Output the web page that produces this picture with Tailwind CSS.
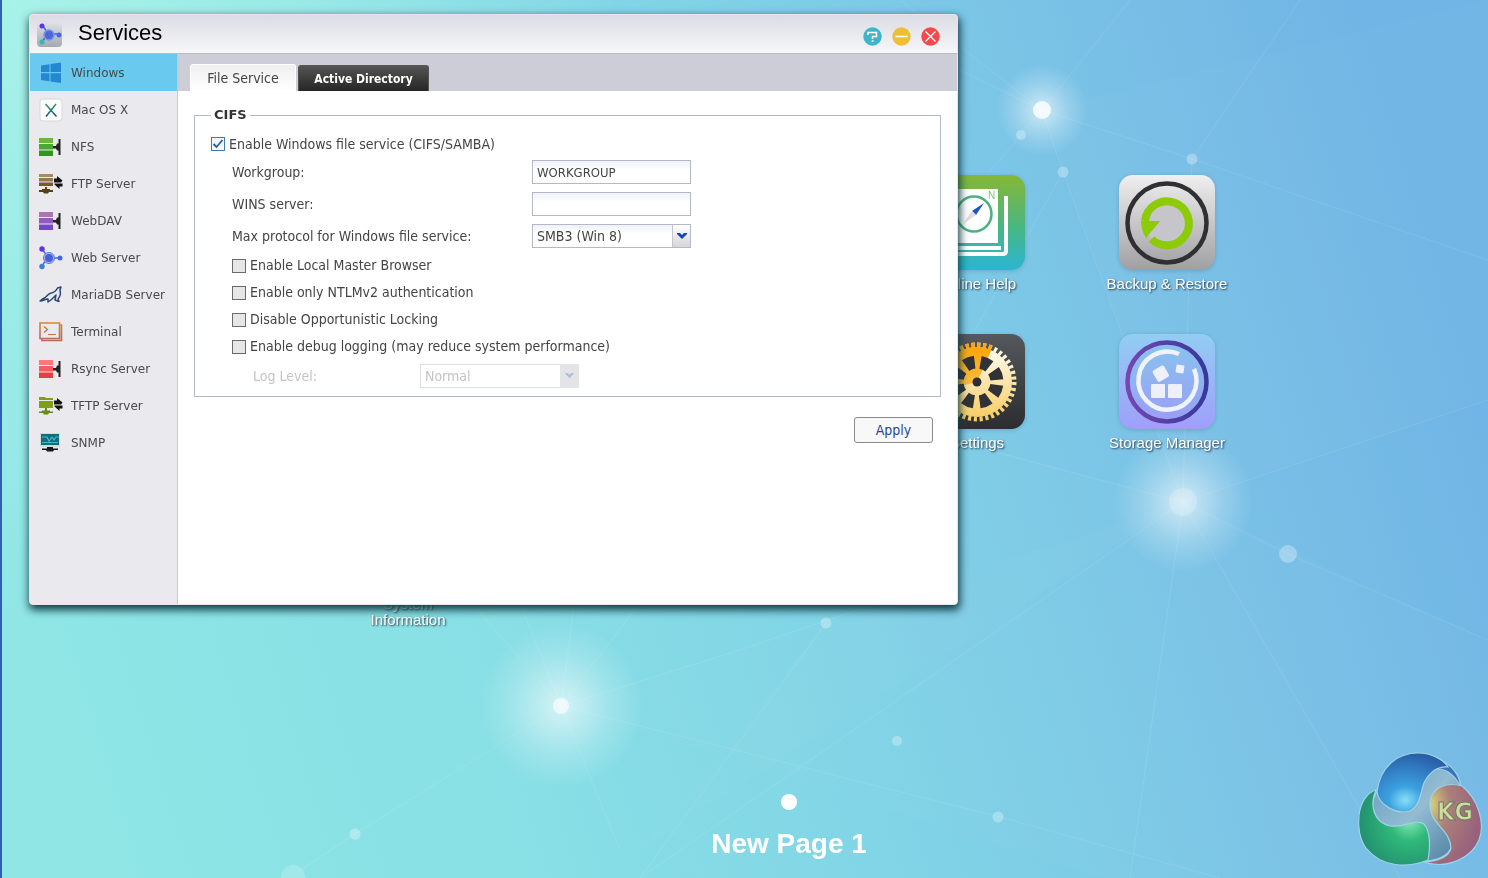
<!DOCTYPE html>
<html lang="en">
<head>
<meta charset="utf-8">
<meta name="viewport" content="width=device-width, initial-scale=1">
<title>Services</title>
<script src="https://cdn.jsdelivr.net/npm/@tailwindcss/browser@4"></script>
</head>
<body class="min-h-screen">
<main class="relative min-h-screen overflow-hidden border-l-2 border-[#2f5fb0] bg-[#84d9e6] font-['Liberation_Sans',Arial,sans-serif]">

  <!-- Wallpaper -->
  <svg class="absolute inset-0 h-full w-full" viewBox="2 0 1486 878" preserveAspectRatio="xMidYMid slice" aria-hidden="true">
    <defs>
      <linearGradient id="sky" gradientUnits="userSpaceOnUse" x1="0" y1="560" x2="1400" y2="130">
        <stop offset="0" stop-color="#8fe6e5"/><stop offset=".3" stop-color="#88dfe5"/><stop offset=".55" stop-color="#80d3e6"/><stop offset=".8" stop-color="#7ac1e6"/><stop offset="1" stop-color="#70b5e5"/>
      </linearGradient>
      <radialGradient id="mint" gradientUnits="userSpaceOnUse" cx="0" cy="0" r="620"><stop offset="0" stop-color="#a8f2e8"/><stop offset="1" stop-color="#a8f2e8" stop-opacity="0"/></radialGradient>
      <radialGradient id="glow"><stop offset="0" stop-color="#fff" stop-opacity=".65"/><stop offset=".25" stop-color="#fff" stop-opacity=".45"/><stop offset=".6" stop-color="#fff" stop-opacity=".2"/><stop offset="1" stop-color="#fff" stop-opacity="0"/></radialGradient>
    </defs>
    <rect width="1490" height="878" fill="url(#sky)"/>
    <rect width="1490" height="878" fill="url(#mint)"/>
    <g fill="#fff" fill-opacity=".02">
      <path d="M561 706L1183 502L1488 640V878H1100Z"/>
      <path d="M1042 110L1488 0V400L1183 502Z"/>
      <path d="M561 706L470 604H640Z"/>
      <path d="M1183 502L960 440V604L826 623L640 850Z"/>
    </g>
    <g stroke="#fff" stroke-opacity=".1" fill="none">
      <path d="M561 706L355 834L293 875M561 706L460 590M561 706L515 590M561 706L576 590M561 706L650 590M561 706L740 650L960 575M561 706L1000 817L1220 878M561 706L620 850"/>
      <path d="M1183 502L1288 554L1488 640M1183 502L1488 400M1183 502L1063 172M1183 502L1192 159M1183 502L640 878M1183 502L950 440M1183 502L1130 878M1183 502L1400 878"/>
      <path d="M1042 110L900 0M1042 110L1063 172L975 330M1042 110L1192 159L1488 260M1042 110L1130 0M1042 110L960 70M1042 110L1021 135L957 210M826 623L640 878M1192 159L1300 0"/>
    </g>
    <circle cx="1042" cy="110" r="46" fill="url(#glow)"/><circle cx="1183" cy="502" r="70" fill="url(#glow)"/><circle cx="561" cy="706" r="82" fill="url(#glow)"/>
    <g fill="#fff">
      <circle cx="1042" cy="110" r="9" opacity=".8"/><circle cx="1183" cy="502" r="14" opacity=".2"/><circle cx="561" cy="706" r="8" opacity=".6"/>
      <g opacity=".3"><circle cx="1021" cy="135" r="5"/><circle cx="1063" cy="172" r="5.500"/><circle cx="1192" cy="159" r="5.500"/><circle cx="1288" cy="554" r="9"/><circle cx="826" cy="623" r="5.500"/><circle cx="897" cy="741" r="5"/><circle cx="998" cy="817" r="5.500"/><circle cx="355" cy="834" r="5.500"/><circle cx="293" cy="877" r="12" opacity=".6"/></g>
    </g>
  </svg>

  <!-- Desktop shortcuts -->
  <a href="#help" class="absolute left-[900px] top-[175px] flex w-[150px] flex-col items-center gap-[3px] text-[15px] leading-5 text-white [text-shadow:1px_1px_2px_#234]">
    <svg width="96" height="96" viewBox="0 0 96 96" class="drop-shadow-sm" aria-hidden="true">
      <defs><linearGradient id="hg" x2="0" y2="1"><stop stop-color="#86b735"/><stop offset=".55" stop-color="#48b782"/><stop offset="1" stop-color="#2bb5d3"/></linearGradient></defs>
      <rect width="96" height="95" rx="14" fill="url(#hg)"/>
      <path d="M16 14H69V68H16Z" fill="#fff"/><path d="M12 73H72M12 79H74Q77 79 77 76V21" fill="none" stroke="#fff" stroke-width="4"/>
      <circle cx="45" cy="39" r="17.500" fill="#fff" stroke="#4bb27f" stroke-width="2.500"/>
      <path d="M55 28L43 36L47 40Z" fill="#1b56c8"/><path d="M34 49L43 36L47 40Z" fill="#ddd"/>
      <text x="59" y="24" font-size="10" fill="#6fd06f" style="text-shadow:none">N</text>
    </svg><span>Online Help</span>
  </a>
  <a href="#backup" class="absolute left-[1090px] top-[175px] flex w-[150px] flex-col items-center gap-[3px] text-[15px] leading-5 text-white [text-shadow:1px_1px_2px_#234]">
    <svg width="96" height="96" viewBox="0 0 96 96" class="drop-shadow-sm" aria-hidden="true">
      <defs><linearGradient id="bg" x2="0" y2="1"><stop stop-color="#efefef"/><stop offset="1" stop-color="#a09fa3"/></linearGradient></defs>
      <rect width="96" height="95" rx="14" fill="url(#bg)"/>
      <circle cx="48" cy="48" r="39.500" fill="none" stroke="#303033" stroke-width="4.500"/>
      <circle cx="48" cy="48" r="22" fill="#c6c6ca"/>
      <path d="M32.500 64A22 22 0 1 0 26 46" fill="none" stroke="#8ccb06" stroke-width="8"/>
      <path d="M22 46H41L27 63Q22 55 22 46Z" fill="#8ccb06"/>
    </svg><span>Backup &amp; Restore</span>
  </a>
  <a href="#settings" class="absolute left-[900px] top-[334px] flex w-[150px] flex-col items-center gap-[3px] text-[15px] leading-5 text-white [text-shadow:1px_1px_2px_#234]">
    <svg width="96" height="96" viewBox="0 0 96 96" class="drop-shadow-sm" aria-hidden="true">
      <defs><linearGradient id="sg" x2="0" y2="1"><stop stop-color="#55585c"/><stop offset="1" stop-color="#2b2d30"/></linearGradient><linearGradient id="gold" x2="0" y2="1"><stop stop-color="#fffdf2"/><stop offset="1" stop-color="#f7cd66"/></linearGradient><linearGradient id="amber" x2="0" y2="1"><stop stop-color="#fda50a"/><stop offset="1" stop-color="#fbcf6c"/></linearGradient>
      <clipPath id="sector"><path d="M48 48L67 6L48 0H0V60Z"/></clipPath></defs>
      <rect width="96" height="95" rx="14" fill="url(#sg)"/>
      <circle cx="48" cy="48" r="37" fill="none" stroke="url(#gold)" stroke-width="5" stroke-dasharray="3.100 2.712"/>
      <circle cx="48" cy="48" r="35" fill="url(#gold)"/>
      <g clip-path="url(#sector)"><circle cx="48" cy="48" r="37" fill="none" stroke="#fda50a" stroke-width="5" stroke-dasharray="3.100 2.712"/><circle cx="48" cy="48" r="35" fill="url(#amber)"/></g>
      <circle cx="48" cy="48" r="20" fill="none" stroke="#303235" stroke-width="13" stroke-dasharray="9.700 6.008" stroke-dashoffset="-3"/>
      <circle cx="48" cy="48" r="4.500" fill="#2b2d30"/>
    </svg><span>Settings</span>
  </a>
  <a href="#storage" class="absolute left-[1090px] top-[334px] flex w-[150px] flex-col items-center gap-[3px] text-[15px] leading-5 text-white [text-shadow:1px_1px_2px_#234]">
    <svg width="96" height="96" viewBox="0 0 96 96" class="drop-shadow-sm" aria-hidden="true">
      <defs><linearGradient id="mg" x2="0" y2="1"><stop stop-color="#92cdf3"/><stop offset="1" stop-color="#9f9ffa"/></linearGradient><linearGradient id="mr"><stop stop-color="#7446b0"/><stop offset="1" stop-color="#37399b"/></linearGradient><linearGradient id="mi" x2="0" y2="1"><stop stop-color="#88c3ee"/><stop offset="1" stop-color="#9a9ff5"/></linearGradient></defs>
      <rect width="96" height="95" rx="14" fill="url(#mg)"/>
      <circle cx="48" cy="48" r="39.500" fill="url(#mi)" stroke="url(#mr)" stroke-width="4.500"/>
      <path d="M60 20A29 29 0 1 0 75 35" fill="none" stroke="#eef3fe" stroke-width="4.500"/>
      <g fill="#eef1fd"><rect x="32" y="50" width="14" height="14" rx="1"/><rect x="49" y="50" width="14" height="14" rx="1"/><rect x="35" y="33" width="13" height="13" rx="2" transform="rotate(-30 42 39)"/><rect x="57" y="31" width="8" height="8" rx="1" transform="rotate(8 61 35)"/></g>
    </svg><span>Storage Manager</span>
  </a>
  <a href="#system" class="absolute left-[356px] top-[596px] w-[100px] text-center text-[15px] leading-4 text-white [text-shadow:1px_1px_2px_#234]">System Information</a>

  <!-- Services window -->
  <section aria-label="Services" class="absolute left-[27px] top-[14px] flex h-[591px] w-[929px] flex-col overflow-hidden rounded-[4px] border border-[#e9e5e8] bg-white shadow-[1px_4px_9px_1px_#123c44]">
    <header class="flex h-[39px] shrink-0 items-center border-b border-[#b9bac2] bg-linear-to-b from-[#dbdce3] to-[#f7f7fa] pl-[7px] pr-[17px]">
      <svg width="25" height="25" viewBox="0 0 25 25" aria-hidden="true">
        <defs><linearGradient id="lg" x2="0" y2="1"><stop stop-color="#dfe2e6"/><stop offset="1" stop-color="#a4a9b0"/></linearGradient></defs>
        <rect width="25" height="25" rx="4" fill="url(#lg)"/>
        <path d="M5 3L11 11L5 20M11 12H22" fill="none" stroke="#4763d8" stroke-width="1.500"/>
        <circle cx="5" cy="4" r="2.500" fill="#5c35e8"/><circle cx="22" cy="13" r="2.500" fill="#4669de"/><circle cx="5" cy="20" r="2.500" fill="#31b8bd"/>
        <circle cx="12" cy="13" r="5" fill="#4a68dc" stroke="#7c94e8" stroke-width="1.500"/>
      </svg>
      <h1 class="ml-4 pb-0.5 text-[22px] leading-7 text-black">Services</h1>
      <div class="ml-auto mt-1 flex gap-[10px]">
        <button aria-label="Help"><svg class="block" width="19" height="19" viewBox="0 0 19 19"><circle cx="9.500" cy="9.500" r="9.200" fill="#3eb6c9"/><path d="M5 8V5.500H13.500V9.500H9.500V12" fill="none" stroke="#fff" stroke-width="1.500"/><path d="M8.700 13.300h1.800v1.800H8.700z" fill="#fff"/></svg></button>
        <button aria-label="Minimize"><svg class="block" width="19" height="19" viewBox="0 0 19 19"><circle cx="9.500" cy="9.500" r="9.200" fill="#eebe35"/><path d="M3.500 9.500H15.500" stroke="#fff" stroke-width="1.300"/></svg></button>
        <button aria-label="Close"><svg class="block" width="19" height="19" viewBox="0 0 19 19"><circle cx="9.500" cy="9.500" r="9.200" fill="#f5484d"/><path d="M4.500 4.500L14.500 14.500M14.500 4.500L4.500 14.500" stroke="#fff" stroke-width="1.300"/></svg></button>
      </div>
    </header>

    <div class="flex min-h-0 flex-1">
      <nav class="w-[148px] shrink-0 border-r border-[#c8c8d2] bg-[#e9e9ee] font-['DejaVu_Sans',Verdana,sans-serif] text-[12px] text-[#4a4a4a]">
        <svg width="0" height="0" class="absolute" aria-hidden="true"><defs>
          <g id="plug"><path d="M14 9H17L18 6.500H19.500V2H21.500V18H19.500V13.500H18L17 11.500H14Z" fill="#222"/></g>
          <g id="swap" fill="#111"><path d="M15 4.500H18V2L23.500 6.500L22 8.500H15Z"/><path d="M23.500 9.500V12.500H20.500V15L15.500 10.500V9.500Z"/></g>
        </defs></svg>
        <a href="#windows" class="flex h-[37px] items-center gap-2 bg-[#69c9ee] pl-[9px]"><svg width="24" height="24" viewBox="0 0 24 24"><path d="M2 4.500L10.500 3.200V11H2ZM11.500 3L22 1.500V11H11.500ZM2 12.200H10.500V20.200L2 19ZM11.500 12.200H22V22L11.500 20.500Z" fill="#2387d2"/></svg>Windows</a>
        <a href="#mac" class="flex h-[37px] items-center gap-2 pl-[9px]"><svg width="24" height="24" viewBox="0 0 24 24"><defs><linearGradient id="xg" x2="0" y2="1"><stop stop-color="#2c9b64"/><stop offset="1" stop-color="#1a5276"/></linearGradient></defs><rect x="1" y="1" width="22" height="22" rx="3" fill="#fcfcfc" stroke="#d8d8dc"/><path d="M6.500 6L17.500 18.500M17 6L7 18.500" stroke="url(#xg)" stroke-width="1.500" fill="none"/></svg>Mac OS X</a>
        <a href="#nfs" class="flex h-[37px] items-center gap-2 pl-[9px]"><svg width="24" height="20" viewBox="0 0 24 20"><path d="M0 1H14V6H0Z" fill="#68b83d"/><path d="M0 7H14V12.500H0Z" fill="#49a82f"/><path d="M0 13.500H14V19H0Z" fill="#30971c"/><use href="#plug"/></svg>NFS</a>
        <a href="#ftp" class="flex h-[37px] items-center gap-2 pl-[9px]"><svg width="24" height="20" viewBox="0 0 24 20"><path d="M0 0H14V3H0Z" fill="#a58d58"/><path d="M0 4H14V7.500H0Z" fill="#94794a"/><path d="M0 8.500H14V12H0Z" fill="#765a2b"/><path d="M6 13H8V15H11V16H14V18H10L9 19.500H5L4 18H0V16H3V15H6Z" fill="#5c3f10"/><use href="#swap"/></svg>FTP Server</a>
        <a href="#webdav" class="flex h-[37px] items-center gap-2 pl-[9px]"><svg width="24" height="20" viewBox="0 0 24 20"><path d="M0 1H14V6H0Z" fill="#ad73b5"/><path d="M0 7H14V12.500H0Z" fill="#925cbb"/><path d="M0 13.500H14V19H0Z" fill="#7548c8"/><use href="#plug"/></svg>WebDAV</a>
        <a href="#web" class="flex h-[37px] items-center gap-2 pl-[9px]"><svg width="24" height="24" viewBox="0 0 24 24"><path d="M3 3L9 11L3 20M9 12H21" fill="none" stroke="#5366dc" stroke-width="1.500"/><circle cx="3" cy="3" r="2.700" fill="#5e35e6"/><circle cx="21" cy="12" r="2.500" fill="#4666dc"/><circle cx="3" cy="20.500" r="2.700" fill="#3d82c8"/><circle cx="10" cy="12" r="5.500" fill="#a9b6ee" stroke="#6179e0" stroke-width="1"/><circle cx="10" cy="12" r="4" fill="#4463d9"/></svg>Web Server</a>
        <a href="#mariadb" class="flex h-[37px] items-center gap-2 pl-[9px]"><svg width="24" height="24" viewBox="0 0 24 24" fill="none" stroke="#2c4a78" stroke-width="1.500" stroke-linejoin="round"><path d="M1 18L4 15.500C7 15.500 8 11.500 11 10.500C15 9.500 17 8.500 18.500 5L22 4L21 7C22 11 21 14 19 16L20 18.500L16 17L17 12L12.500 16.500L9 19V16C7 15.500 5 17.500 1 18Z"/></svg>MariaDB Server</a>
        <a href="#terminal" class="flex h-[37px] items-center gap-2 pl-[9px]"><svg width="24" height="20" viewBox="0 0 24 20"><defs><linearGradient id="tg" x2="0" y2="1"><stop stop-color="#dc8530"/><stop offset="1" stop-color="#b46a62"/></linearGradient></defs><path d="M1 1H20.500V16.500H1ZM20.500 3H22.500V18.500H3V17" fill="none" stroke="url(#tg)" stroke-width="1.600"/><path d="M5 4.500L8.500 7.500L5 10.500M9 12.500H17" fill="none" stroke="#be7050" stroke-width="1.200"/></svg>Terminal</a>
        <a href="#rsync" class="flex h-[37px] items-center gap-2 pl-[9px]"><svg width="24" height="20" viewBox="0 0 24 20"><path d="M0 1H14V6H0Z" fill="#ff7777"/><path d="M0 7H14V12.500H0Z" fill="#f95b5d"/><path d="M0 13.500H14V19H0Z" fill="#ec3a40"/><use href="#plug"/></svg>Rsync Server</a>
        <a href="#tftp" class="flex h-[37px] items-center gap-2 pl-[9px]"><svg width="24" height="20" viewBox="0 0 24 20"><path d="M0 1H6L7 2H14V4H0ZM0 5H14V12H0Z" fill="#7f9f16"/><path d="M6 12H8V14.500H11V15.500H14V17H10L9 18.500H5L4 17H0V15.500H3V14.500H6Z" fill="#6a8a10"/><use href="#swap"/></svg>TFTP Server</a>
        <a href="#snmp" class="flex h-[37px] items-center gap-2 pl-[9px]"><svg width="24" height="22" viewBox="0 0 24 22"><path d="M1 1H21V15H1Z" fill="#d8d8da"/><path d="M2 2H20V13H2Z" fill="#176a7d"/><path d="M3 5H8L10 9L13 5L15 8L17 5H20M3 10.500H19" fill="none" stroke="#35c2d0" stroke-width="1.200"/><path d="M8 15H14V16.500H19V18H15L14 19.500H8L7 18H3V16.500H8Z" fill="#181818"/></svg>SNMP</a>
      </nav>

      <div class="min-w-0 flex-1 font-['DejaVu_Sans_Condensed','DejaVu_Sans',Tahoma,sans-serif] text-[14px] text-[#444] [font-stretch:condensed]">
        <div role="tablist" class="flex h-[37px] items-end gap-[2px] bg-[#cccdd6] pl-3">
          <button role="tab" aria-selected="true" class="h-[27px] w-[106px] rounded-t-[3px] border border-b-0 border-white bg-linear-to-b from-[#efeff0] to-white">File Service</button>
          <button role="tab" aria-selected="false" class="h-[26px] w-[131px] rounded-t-[3px] border border-b-0 border-[#555] bg-linear-to-b from-[#555] to-[#262626] text-[12px] font-bold text-white">Active Directory</button>
        </div>
        <form class="px-4 pt-[14px]">
          <fieldset class="border border-[#b5b8cc] pb-1 pl-4">
            <legend class="px-[3px] font-['DejaVu_Sans',Verdana,sans-serif] text-[13px] leading-5 font-bold text-[#333] [font-stretch:normal]">CIFS</legend>
            <label class="mt-2 flex h-[22px] items-center gap-1">
              <span class="grid shrink-0"><input type="checkbox" checked class="col-start-1 row-start-1 size-[14px] appearance-none border border-[#3b78b5] bg-[#f0f6fc]"><svg class="pointer-events-none col-start-1 row-start-1" width="14" height="14" viewBox="0 0 14 14"><path d="M2.500 7L5.500 10L11.500 3" fill="none" stroke="#1c63ae" stroke-width="1.800"/></svg></span>
              Enable Windows file service (CIFS/SAMBA)</label>
            <div class="pt-px pl-[21px]">
              <div class="flex h-8 items-center"><label for="wg" class="w-[300px]">Workgroup:</label><input id="wg" value="WORKGROUP" class="h-6 w-[159px] border border-[#b5b8cc] bg-linear-to-b from-[#f1f2f5] to-white to-40% px-1 text-[13px]"></div>
              <div class="flex h-8 items-center"><label for="wins" class="w-[300px]">WINS server:</label><input id="wins" class="h-6 w-[159px] border border-[#b5b8cc] bg-linear-to-b from-[#f1f2f5] to-white to-40% px-1 text-[13px]"></div>
              <div class="flex h-8 items-center"><label for="proto" class="w-[300px]">Max protocol for Windows file service:</label>
                <div class="grid w-[159px]"><select id="proto" class="col-start-1 row-start-1 h-6 appearance-none border border-[#b5b8cc] bg-linear-to-b from-[#f1f2f5] to-white to-40% px-1"><option>SMB3 (Win 8)</option></select>
                <span class="pointer-events-none col-start-1 row-start-1 my-px mr-px grid w-[18px] place-items-center justify-self-end border-l border-[#c4c5cf] bg-linear-to-b from-white to-[#d5d5da]"><svg width="10" height="7" viewBox="0 0 10 7"><path d="M0 0H3L5 2L7 0H10V1L5 6L0 1Z" fill="#1443b8"/></svg></span></div></div>
              <label class="flex h-[27px] items-center gap-1"><input type="checkbox" class="size-[14px] appearance-none border border-[#6b6b6b] bg-[#e6e6e6]">Enable Local Master Browser</label>
              <label class="flex h-[27px] items-center gap-1"><input type="checkbox" class="size-[14px] appearance-none border border-[#6b6b6b] bg-[#e6e6e6]">Enable only NTLMv2 authentication</label>
              <label class="flex h-[27px] items-center gap-1"><input type="checkbox" class="size-[14px] appearance-none border border-[#6b6b6b] bg-[#e6e6e6]">Disable Opportunistic Locking</label>
              <label class="flex h-[27px] items-center gap-1"><input type="checkbox" class="size-[14px] appearance-none border border-[#6b6b6b] bg-[#e6e6e6]">Enable debug logging (may reduce system performance)</label>
              <div class="flex h-8 items-center pl-[21px] text-[#c4c4c4]"><label for="log" class="w-[167px]">Log Level:</label>
                <div class="grid w-[159px]"><select id="log" disabled class="col-start-1 row-start-1 h-6 appearance-none border border-[#e0e1e8] bg-white px-1 text-[#c4c4c4] opacity-100"><option>Normal</option></select>
                <span class="pointer-events-none col-start-1 row-start-1 grid w-[19px] place-items-center justify-self-end bg-[#e4e4e6]"><svg width="9" height="6" viewBox="0 0 10 7"><path d="M0 0H3L5 2L7 0H10V1L5 6L0 1Z" fill="#a9c0e2"/></svg></span></div></div>
            </div>
          </fieldset>
          <div class="flex justify-end pr-2 pt-5"><button type="button" class="h-[26px] w-[79px] rounded-[3px] border border-[#8a8a8e] bg-[#f8f8f8] text-[#2b43a0]">Apply</button></div>
        </form>
      </div>
    </div>
  </section>

  <!-- Page indicator -->
  <div class="absolute inset-x-0 top-[794px] flex flex-col items-center gap-[18px] pl-[88px] text-white">
    <span class="size-4 rounded-full bg-white"></span>
    <h2 class="text-[28px] leading-8 font-bold">New Page 1</h2>
  </div>

  <!-- Corner emblem -->
  <svg class="absolute right-0 bottom-0 opacity-80" width="148" height="138" viewBox="0 0 148 138" aria-label="KG">
    <defs>
      <radialGradient id="kb" cx=".4" cy=".8" r=".8"><stop stop-color="#8fe8fb"/><stop offset=".3" stop-color="#2b9ade"/><stop offset="1" stop-color="#17479a"/></radialGradient>
      <radialGradient id="kg" cx=".72" cy=".4" r=".8"><stop stop-color="#8df5ac"/><stop offset=".35" stop-color="#1fb85f"/><stop offset="1" stop-color="#0a7a50"/></radialGradient>
      <radialGradient id="kr" cx=".1" cy=".25" r=".9"><stop stop-color="#f5d860"/><stop offset=".4" stop-color="#b8705f"/><stop offset="1" stop-color="#a04a62"/></radialGradient>
      <linearGradient id="ks" x2="1" y2="1"><stop stop-color="#5f93b3"/><stop offset=".5" stop-color="#9bbccf"/><stop offset="1" stop-color="#3d6b88"/></linearGradient>
    </defs>
    <g stroke="#a8d8ea" stroke-width="1.200">
      <path d="M88 26C104 20 118 28 121 46C120 60 113 100 111 108C108 116 96 121 84 121L36 90C29 76 31 60 38 50Z" fill="url(#ks)"/>
      <path d="M92 18C108 20 119 32 121 47C114 34 106 29 98 29Z" fill="#2a63ac"/>
      <path d="M37 52C40 26 58 13 78 13C92 13 104 20 108 27C98 26 89 32 84 43C80 54 80 66 70 71C56 75 39 65 37 52Z" fill="url(#kb)"/>
      <path d="M36 50C16 56 14 92 26 108C42 128 68 128 88 120C90 108 91 92 84 84C74 78 66 88 50 86C34 82 29 66 36 50Z" fill="url(#kg)"/>
      <path d="M90 62C92 46 108 42 122 46C137 58 146 82 139 100C132 117 108 130 84 122C98 121 109 117 111 108C110 88 88 84 90 62Z" fill="url(#kr)"/>
    </g>
    <text x="97" y="80" font-family="'Liberation Sans Narrow','DejaVu Sans Condensed',sans-serif" font-size="25" font-weight="bold" fill="#e8e488" stroke="#5f6d49" stroke-width="1">KG</text>
  </svg>
</main>
</body>
</html>
